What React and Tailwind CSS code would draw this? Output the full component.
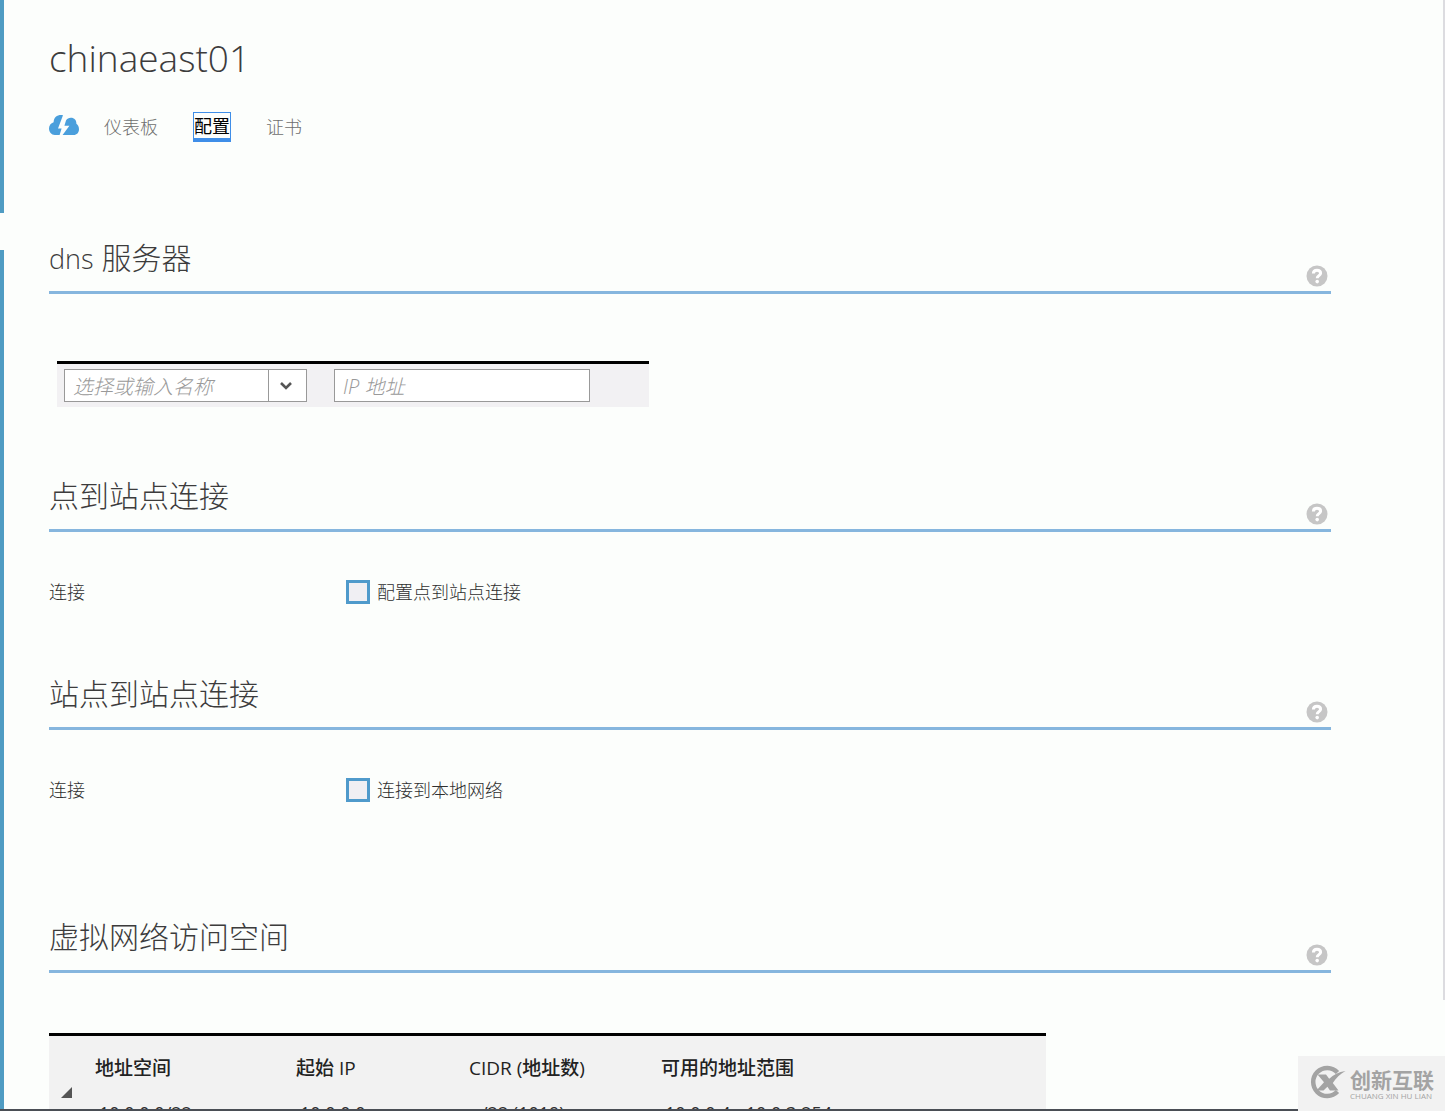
import { useState } from "react";

const addressSpaces = [
  {
    space: "10.0.0.0/22",
    start: "10.0.0.0",
    cidr: "/22 (1019)",
    range: "10.0.0.4 - 10.0.3.254",
  },
];

function HelpIcon() {
  return (
    <svg viewBox="0 0 22 22" className="w-[22px] h-[22px]" aria-hidden="true">
      <circle cx="11" cy="11" r="10.5" fill="#c6c6c6" />
      <path
        d="M7.4 8.4C7.4 6.2 9 5.2 11 5.2s3.6 1.1 3.6 3c0 2.4-3.4 2.4-3.4 5"
        fill="none"
        stroke="#fff"
        strokeWidth="3"
      />
      <circle cx="11.2" cy="16.6" r="1.8" fill="#fff" />
    </svg>
  );
}

function CloudIcon() {
  return (
    <svg viewBox="0 0 30 20" className="w-[30px] h-5 mb-1" aria-hidden="true">
      <path
        d="M14 0.2C8.6-0.6 5 2 4.6 7.2 1.8 8 0 10.4 0 13.6 0 17.2 2.4 20 5.8 20H10.6l2-6.6H9L14 0.2Z"
        fill="#4a9fdc"
      />
      <path
        d="M17 5.6c1-1.8 2.8-2.8 4.8-2.8 3.6 0 5.8 2.6 5.6 6 1.6 1 2.6 3 2.6 5.4 0 3.4-2.2 5.8-5.4 5.8H13.6l6.8-9.2h-5l1.6-5.2Z"
        fill="#4a9fdc"
      />
    </svg>
  );
}

function SectionHeader({ children }) {
  return (
    <div className="flex items-end justify-between border-b-3 border-[#86b6de]">
      <h2 className="text-[30px] leading-10 pb-[13px] font-light text-[#3c3c3c]">{children}</h2>
      <button type="button" aria-label="帮助" className="mr-[3px] mb-1">
        <HelpIcon />
      </button>
    </div>
  );
}

function CheckRow({ id, label }) {
  const [checked, setChecked] = useState(false);

  return (
    <div className="flex items-center mt-12 h-6 text-lg leading-6 font-light text-[#2f2f2f]">
      <span className="w-[297px]">连接</span>
      <input
        id={id}
        type="checkbox"
        checked={checked}
        onChange={(e) => setChecked(e.target.checked)}
        className="appearance-none w-6 h-6 border-3 border-[#4f9acb] bg-[#f0eff3] checked:bg-[#4f9acb]"
      />
      <label htmlFor={id} className="ml-[7px]">{label}</label>
    </div>
  );
}

function Watermark() {
  return (
    <div className="absolute right-0 bottom-0 flex items-center w-[147px] h-[55px] pl-3 gap-1 bg-[#f2f2f2] text-[#a3a3a3]">
      <svg viewBox="0 0 36 34" className="w-9 h-[34px] shrink-0 mb-1" aria-hidden="true">
        <path
          d="M27.5 7.5A14 14 0 1 0 27.5 26.5"
          fill="none"
          stroke="#a3a3a3"
          strokeWidth="4.5"
        />
        <path
          d="M7.5 9.5H16l3.2 4.3C23.5 10 28.5 7 35.5 6 30 9 26 13 22.8 18l5.7 7.5H20l-2.6-3.8L13.5 25.5H6.5l7.5-8.3Z"
          fill="#a3a3a3"
        />
      </svg>
      <div className="whitespace-nowrap">
        <div className="text-[21px] leading-6 font-bold">创新互联</div>
        <div className="text-[8px] leading-2">CHUANG XIN HU LIAN</div>
      </div>
    </div>
  );
}

export default function App() {
  const [name, setName] = useState("");
  const [ip, setIp] = useState("");

  return (
    <div className="relative flex h-screen overflow-hidden bg-[#fcfefc] font-['Open_Sans','Noto_Sans_CJK_SC',sans-serif]">
      {/* blue rail on the left, with a gap for the selected item */}
      <aside className="flex flex-col gap-[37px] w-1 shrink-0">
        <div className="h-[213px] shrink-0 bg-[#4f9cc3]" />
        <div className="grow bg-[#4f9cc3]" />
      </aside>

      <main className="grow pl-[45px] pr-[114px] pt-7">
        <h1 className="text-[37px] leading-[60px] font-light text-[#3c3c3c]">chinaeast01</h1>

        <nav className="flex items-center mt-6 h-[30px] text-lg font-light text-[#6e6e6e]">
          <CloudIcon />
          <a href="#dashboard" className="ml-[25px]">仪表板</a>
          <a
            href="#configure"
            className="ml-[35px] h-[30px] leading-[27px] border border-b-4 border-[#3f8ee8] font-normal text-black"
          >
            配置
          </a>
          <a href="#certificates" className="ml-[35px]">证书</a>
        </nav>

        <section className="mt-24">
          <SectionHeader>
            <span className="text-[27px] leading-none">dns</span> 服务器
          </SectionHeader>
          <div className="flex mt-[67px] ml-2 w-[592px] pl-[7px] pt-[5px] pb-[5px] border-t-3 border-black bg-[#f2f1f3]">
            <div className="flex w-[243px] h-[33px] border border-[#999] bg-white">
              <input
                aria-label="名称"
                value={name}
                onChange={(e) => setName(e.target.value)}
                placeholder="选择或输入名称"
                className="w-[203px] px-2 pt-0.5 text-xl font-light italic placeholder:text-[#999] outline-none"
              />
              <button
                type="button"
                aria-label="选择名称"
                className="flex grow items-center justify-center pr-1 border-l border-[#999]"
              >
                <svg viewBox="0 0 12 8" className="w-3 h-2" fill="none" stroke="#555" strokeWidth="2.6">
                  <path d="M1 1l5 5 5-5" />
                </svg>
              </button>
            </div>
            <input
              aria-label="IP 地址"
              value={ip}
              onChange={(e) => setIp(e.target.value)}
              placeholder="IP 地址"
              className="ml-[27px] w-64 h-[33px] px-2 pt-0.5 border border-[#999] bg-white text-xl font-light italic placeholder:text-[#999] outline-none"
            />
          </div>
        </section>

        <section className="mt-[69px]">
          <SectionHeader>点到站点连接</SectionHeader>
          <CheckRow id="point-to-site" label="配置点到站点连接" />
        </section>

        <section className="mt-[70px]">
          <SectionHeader>站点到站点连接</SectionHeader>
          <CheckRow id="site-to-site" label="连接到本地网络" />
        </section>

        <section className="mt-[115px]">
          <SectionHeader>虚拟网络访问空间</SectionHeader>
          <table className="table-fixed mt-[60px] w-[997px] border-t-3 border-black bg-[#f2f2f2] text-left text-lg text-[#2f2f2f]">
            <thead>
              <tr className="h-[52px] text-[19px] text-[#222]">
                <th className="w-[46px]"></th>
                <th className="w-[201px] pt-4 font-medium">地址空间</th>
                <th className="w-[173px] pt-4 font-medium">起始 IP</th>
                <th className="w-48 pt-4 font-medium">CIDR (地址数)</th>
                <th className="pt-4 font-medium">可用的地址范围</th>
              </tr>
            </thead>
            <tbody>
              {addressSpaces.map((row) => (
                <tr key={row.space} className="align-top">
                  <td className="pl-3">
                    <button type="button" aria-label="展开" className="block">
                      <svg viewBox="0 0 11 11" className="w-[11px] h-[11px]">
                        <path d="M11 0v11H0z" fill="#555" />
                      </svg>
                    </button>
                  </td>
                  <td className="pl-1 pt-3">{row.space}</td>
                  <td className="pl-1 pt-3">{row.start}</td>
                  <td className="pl-3 pt-3">{row.cidr}</td>
                  <td className="pl-1 pt-3">{row.range}</td>
                </tr>
              ))}
            </tbody>
          </table>
        </section>
      </main>

      <div className="absolute right-0 top-0 w-0.5 h-[90%] bg-[#dcdce0]" />
      <div className="absolute left-0 right-0 bottom-0 h-0.5 bg-[#4a4e55]" />
      <Watermark />
    </div>
  );
}
